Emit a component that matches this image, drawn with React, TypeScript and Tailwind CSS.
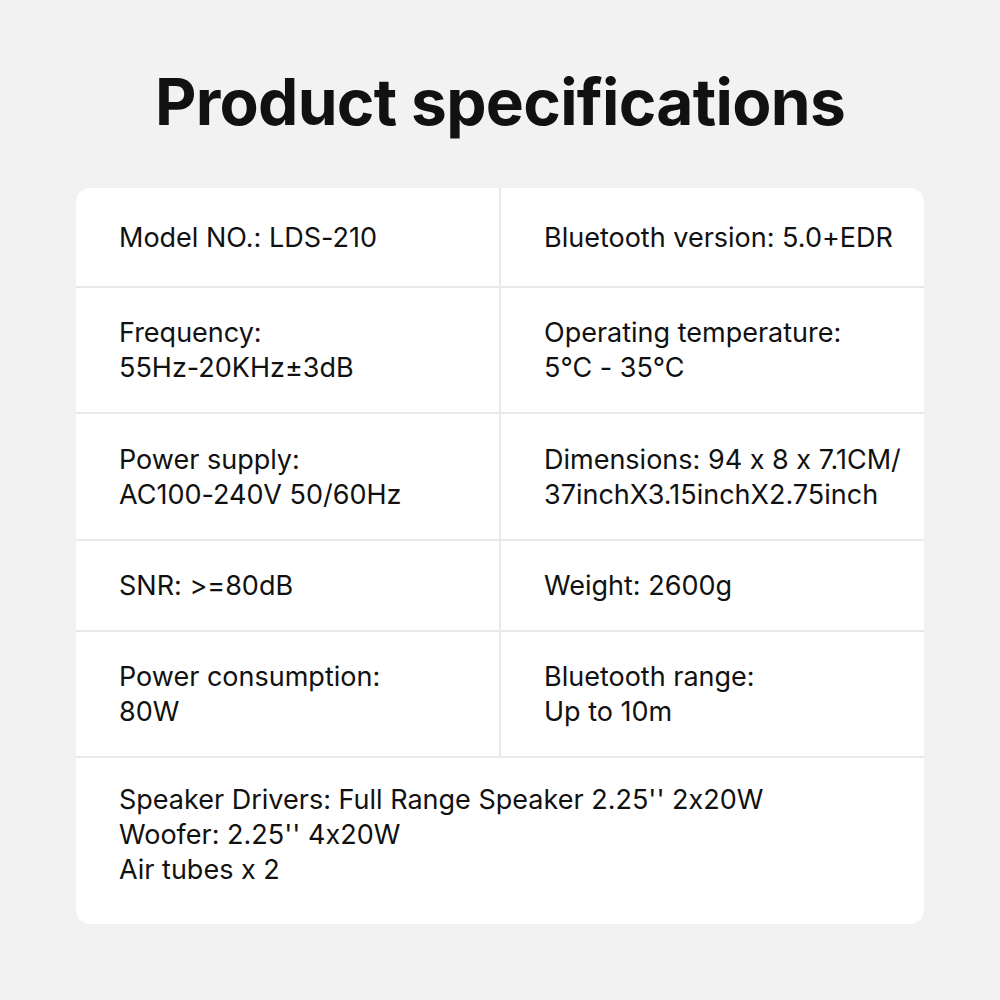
export default function App() {
  const rows: { left: string[]; right?: string[]; h: string }[] = [
    { left: ["Model NO.: LDS-210"], right: ["Bluetooth version: 5.0+EDR"], h: "h-[98px]" },
    { left: ["Frequency:", "55Hz-20KHz±3dB"], right: ["Operating temperature:", "5°C - 35°C"], h: "h-[124px]" },
    { left: ["Power supply:", "AC100-240V 50/60Hz"], right: ["Dimensions: 94 x 8 x 7.1CM/", "37inchX3.15inchX2.75inch"], h: "h-[125px]" },
    { left: ["SNR: >=80dB"], right: ["Weight: 2600g"], h: "h-[89px]" },
    { left: ["Power consumption:", "80W"], right: ["Bluetooth range:", "Up to 10m"], h: "h-[124px]" },
  ];

  return (
    <div className="w-[1000px] h-[1000px] bg-[#f2f2f2] flex flex-col items-center pt-[65px] font-['Inter','Liberation_Sans',sans-serif] text-[#111] [font-feature-settings:'calt'_0]">
      <h1 className="text-[64px] leading-[74px] font-bold tracking-[-0.7px] mb-[49px]">Product specifications</h1>

      <div className="w-[848px] rounded-[14px] overflow-hidden bg-[#e9e9e9] grid grid-cols-2 gap-[2px] text-[27px] leading-[35px]">
        {rows.map((r, i) => (
          <>
            <div key={"l" + i} className={`bg-white ${r.h} flex flex-col justify-center pl-[43px]`}>
              {r.left.map((t) => (
                <div key={t}>{t}</div>
              ))}
            </div>
            <div key={"r" + i} className={`bg-white ${r.h} flex flex-col justify-center pl-[43px]`}>
              {r.right?.map((t) => (
                <div key={t}>{t}</div>
              ))}
            </div>
          </>
        ))}
        <div className="col-span-2 bg-white h-[166px] flex flex-col justify-center pl-[43px] pb-[14px]">
          <div>Speaker Drivers: Full Range Speaker 2.25'' 2x20W</div>
          <div>Woofer: 2.25'' 4x20W</div>
          <div>Air tubes x 2</div>
        </div>
      </div>
    </div>
  );
}
